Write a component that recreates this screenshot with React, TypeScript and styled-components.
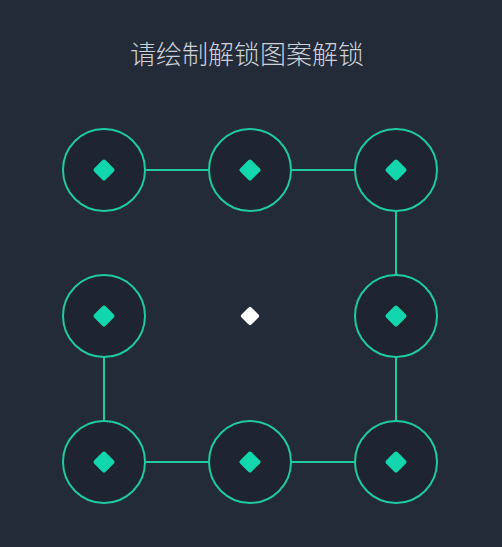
import React from "react";
import styled, { createGlobalStyle } from "styled-components";

const Global = createGlobalStyle`
  html, body { margin: 0; padding: 0; background: #232b38; }
  body { font-family: "Noto Sans CJK SC", "Noto Sans", sans-serif; }
`;

const Page = styled.div`
  width: 502px;
  height: 547px;
  background: #232b38;
  display: flex;
  flex-direction: column;
  align-items: center;
  overflow: hidden;
`;

const Title = styled.h1`
  margin: 36px 8px 0 0;
  height: 34px;
  line-height: 34px;
  font-size: 26px;
  font-weight: 300;
  color: #cdd1d8;
  letter-spacing: 0;
`;

const Board = styled.div`
  position: relative;
  margin-top: 27px;
  margin-right: 2px;
  display: grid;
  grid-template-columns: repeat(3, 146px);
  grid-template-rows: repeat(3, 146px);
`;

const Lines = styled.svg`
  position: absolute;
  inset: 0;
  width: 438px;
  height: 438px;
  z-index: 0;
`;

const Cell = styled.div`
  position: relative;
  z-index: 1;
  display: flex;
  align-items: center;
  justify-content: center;
`;

const Ring = styled.div<{ $active: boolean }>`
  box-sizing: border-box;
  width: 84px;
  height: 84px;
  border-radius: 50%;
  display: flex;
  align-items: center;
  justify-content: center;
  border: 2px solid ${(p) => (p.$active ? "#1fc9a1" : "transparent")};
  background: ${(p) => (p.$active ? "#1f2530" : "transparent")};
`;

const Diamond = styled.div<{ $active: boolean }>`
  width: ${(p) => (p.$active ? 16 : 14)}px;
  height: ${(p) => (p.$active ? 16 : 14)}px;
  border-radius: 2px;
  transform: rotate(45deg);
  background: ${(p) => (p.$active ? "#12d6ae" : "#ffffff")};
`;

const active = [true, true, true, true, false, true, true, true, true];
const path = [
  [0, 0],
  [1, 0],
  [2, 0],
  [2, 1],
  [2, 2],
  [1, 2],
  [0, 2],
  [0, 1],
];

export default function App() {
  const pts = path.map(([c, r]) => `${73 + c * 146},${73 + r * 146}`).join(" ");
  return (
    <Page>
      <Global />
      <Title>请绘制解锁图案解锁</Title>
      <Board>
        <Lines viewBox="0 0 438 438">
          <polyline points={pts} fill="none" stroke="#1fc9a1" strokeWidth={2} />
        </Lines>
        {active.map((a, i) => (
          <Cell key={i}>
            <Ring $active={a}>
              <Diamond $active={a} />
            </Ring>
          </Cell>
        ))}
      </Board>
    </Page>
  );
}
